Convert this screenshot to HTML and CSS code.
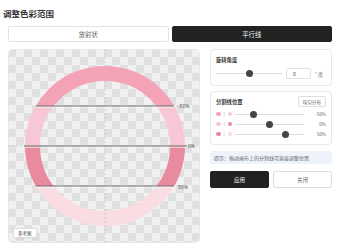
FILE: index.html
```html
<!DOCTYPE html>
<html lang="zh">
<head>
  <meta charset="UTF-8"/>
  <title>调整色彩范围</title>
  <link rel="stylesheet" href="styles.css">
</head>
<body>
  <div class="header">
    <h1 class="title">调整色彩范围</h1>
  </div>
  <div class="content">
    <div class="tabs">
      <button class="tab">放射状</button>
      <button class="tab active">平行线</button>
    </div>

    <div class="main">
      <div class="canvas">
        <svg class="preview" width="192" height="194" viewBox="0 0 192 194">
          <defs>
            <clipPath id="seg1"><rect x="0" y="0" width="192" height="57"/></clipPath>
            <clipPath id="seg2"><rect x="0" y="57" width="192" height="40"/></clipPath>
            <clipPath id="seg3"><rect x="0" y="97" width="192" height="40"/></clipPath>
            <clipPath id="seg4"><rect x="0" y="137" width="192" height="57"/></clipPath>
          </defs>
          <!-- ring split by the lines -->
          <circle cx="97" cy="97" r="72.5" fill="none" stroke="#f4a3b7" stroke-width="15" clip-path="url(#seg1)"/>
          <circle cx="97" cy="97" r="72.5" fill="none" stroke="#f8c7d5" stroke-width="15" clip-path="url(#seg2)"/>
          <circle cx="97" cy="97" r="72.5" fill="none" stroke="#e98a9f" stroke-width="15" clip-path="url(#seg3)"/>
          <circle cx="97" cy="97" r="72.5" fill="none" stroke="#fadce3" stroke-width="15" clip-path="url(#seg4)"/>
          <!-- crosshair -->
          <line x1="97" y1="0" x2="97" y2="194" stroke="#c4c4c4" stroke-width="1" stroke-dasharray="2 2" opacity="0.8"/>
          <line x1="0" y1="97" x2="192" y2="97" stroke="#c4c4c4" stroke-width="1" stroke-dasharray="2 2" opacity="0.8"/>
          <!-- split lines -->
          <line x1="28" y1="58" x2="166" y2="58" stroke="#ffffff" stroke-width="1"/>
          <line x1="28" y1="57" x2="166" y2="57" stroke="#6e6e6e" stroke-width="1"/>
          <line x1="16" y1="98" x2="179" y2="98" stroke="#ffffff" stroke-width="1"/>
          <line x1="16" y1="97" x2="179" y2="97" stroke="#6e6e6e" stroke-width="1"/>
          <line x1="28" y1="138" x2="166" y2="138" stroke="#ffffff" stroke-width="1"/>
          <line x1="28" y1="137" x2="166" y2="137" stroke="#6e6e6e" stroke-width="1"/>
          <text class="line-label" x="170" y="59">-50%</text>
          <text class="line-label" x="180" y="99">0%</text>
          <text class="line-label" x="170" y="139.5">50%</text>
        </svg>
        <button class="ref-btn">参考图</button>
      </div>

      <div class="side">
        <div class="card">
          <div class="card-title">旋转角度</div>
          <div class="angle-row">
            <div class="slider">
              <div class="track"></div>
              <div class="thumb" style="left: 50%"></div>
            </div>
            <input class="num" type="text" value="0"/>
            <span class="unit">° 度</span>
          </div>
        </div>

        <div class="card">
          <div class="card-head">
            <div class="card-title">分割线位置</div>
            <button class="small-btn">均匀分布</button>
          </div>
          <div class="split-row">
            <span class="dot" style="background: #f4a3b7"></span>
            <span class="sep">|</span>
            <span class="dot" style="background: #f8c7d5"></span>
            <div class="slider">
              <div class="track"></div>
              <div class="thumb" style="left: 27%"></div>
            </div>
            <span class="val">-50%</span>
          </div>
          <div class="split-row">
            <span class="dot" style="background: #f8c7d5"></span>
            <span class="sep">|</span>
            <span class="dot" style="background: #e98a9f"></span>
            <div class="slider">
              <div class="track"></div>
              <div class="thumb" style="left: 50%"></div>
            </div>
            <span class="val">0%</span>
          </div>
          <div class="split-row">
            <span class="dot" style="background: #e98a9f"></span>
            <span class="sep">|</span>
            <span class="dot" style="background: #fadce3"></span>
            <div class="slider">
              <div class="track"></div>
              <div class="thumb" style="left: 73%"></div>
            </div>
            <span class="val">50%</span>
          </div>
        </div>

        <div class="hint">提示：拖动画布上的分割线可直接调整位置</div>

        <div class="actions">
          <button class="btn primary">应用</button>
          <button class="btn">关闭</button>
        </div>
      </div>
    </div>
  </div>
</body>
</html>
```

FILE: styles.css
```css
body {
  margin: 0;
  padding: 0;
  background: #fff;
  font-family: "Noto Sans CJK SC", "Noto Sans", sans-serif;
  color: #333;
}

.header {
  padding: 8px 3px 0;
}

.title {
  margin: 0;
  font-size: 8.5px;
  line-height: 11px;
  font-weight: 700;
  color: #333;
}

.content {
  padding: 0 8px;
}

.tabs {
  display: grid;
  grid-template-columns: 1fr 1fr;
  gap: 3px;
  margin-top: 7px;
}

.tab {
  height: 16px;
  padding: 0;
  border: 1px solid #e4e4e4;
  border-radius: 2px;
  background: #fff;
  color: #666;
  font-family: inherit;
  font-size: 6.3px;
  cursor: pointer;
}

.tab.active {
  background: #222;
  border-color: #222;
  color: #fff;
}

.main {
  display: grid;
  grid-template-columns: 192px 1fr;
  gap: 10px;
  margin-top: 7px;
}

.canvas {
  position: relative;
  height: 194px;
  border-radius: 5px;
  overflow: hidden;
  background-color: #f1f1f1;
  background-image: conic-gradient(#e0e0e0 25%, transparent 0 50%, #e0e0e0 0 75%, transparent 0);
  background-size: 16px 16px;
  background-position: 8px 0;
  box-shadow: inset 0 0 0 1px #e6e6e6;
}

.preview {
  display: block;
}

.line-label {
  font-family: "Noto Sans", sans-serif;
  font-size: 5px;
  fill: #555;
}

.ref-btn {
  position: absolute;
  left: 5px;
  bottom: 5px;
  height: 10px;
  padding: 0 4px;
  border: 1px solid #ddd;
  border-radius: 2px;
  background: #fff;
  color: #555;
  font-family: inherit;
  font-size: 4.5px;
  box-shadow: 0 1px 2px rgba(0, 0, 0, 0.06);
}

.side {
  display: flex;
  flex-direction: column;
}

.card {
  border: 1px solid #e8e8e8;
  border-radius: 4px;
  padding: 6px 5px 6px 5px;
  background: #fff;
}

.card + .card {
  margin-top: 5px;
  padding-top: 4px;
}

.card-title {
  font-size: 5.3px;
  line-height: 8px;
  font-weight: 700;
  color: #333;
}

.angle-row {
  display: flex;
  align-items: center;
  gap: 4px;
  margin-top: 4px;
  height: 11px;
}

.slider {
  position: relative;
  flex: 1;
  height: 8px;
}

.track {
  position: absolute;
  left: 0;
  right: 0;
  top: 3.5px;
  height: 1.2px;
  border-radius: 1px;
  background: #dcdcdc;
}

.thumb {
  position: absolute;
  top: 0.5px;
  width: 7px;
  height: 7px;
  margin-left: -3.5px;
  border-radius: 50%;
  background: #444;
}

.num {
  width: 25px;
  height: 11px;
  box-sizing: border-box;
  border: 1px solid #e2e2e2;
  border-radius: 2px;
  padding: 0 0 0 6px;
  font-family: inherit;
  font-size: 5px;
  color: #555;
  outline: none;
}

.unit {
  font-size: 5px;
  color: #666;
  padding-right: 3px;
}

.card-head {
  display: flex;
  justify-content: space-between;
  align-items: center;
  height: 11px;
  padding-left: 0;
}

.small-btn {
  height: 11px;
  padding: 0 4px;
  border: 1px solid #dedede;
  border-radius: 2px;
  background: #fff;
  color: #555;
  font-family: inherit;
  font-size: 4.6px;
}

.split-row {
  display: flex;
  align-items: center;
  height: 8px;
  margin-top: 2px;
}

.card-head + .split-row {
  margin-top: 3px;
}

.dot {
  width: 4.5px;
  height: 4.5px;
  border-radius: 50%;
}

.sep {
  width: 7px;
  text-align: center;
  font-size: 4.5px;
  color: #999;
}

.split-row .slider {
  margin-left: 3px;
}

.val {
  width: 22px;
  text-align: right;
  font-size: 4.6px;
  color: #666;
}

.hint {
  margin-top: 6px;
  height: 13px;
  line-height: 13px;
  padding-left: 4px;
  border-radius: 3px;
  background: #eef3fb;
  color: #666;
  font-size: 5px;
  white-space: nowrap;
}

.actions {
  display: grid;
  grid-template-columns: 1fr 1fr;
  gap: 4px;
  margin-top: 7px;
}

.btn {
  height: 17px;
  padding: 0;
  border: 1px solid #dedede;
  border-radius: 2px;
  background: #fff;
  color: #666;
  font-family: inherit;
  font-size: 5.5px;
  cursor: pointer;
}

.btn.primary {
  background: #222;
  border-color: #222;
  color: #fff;
}
```
